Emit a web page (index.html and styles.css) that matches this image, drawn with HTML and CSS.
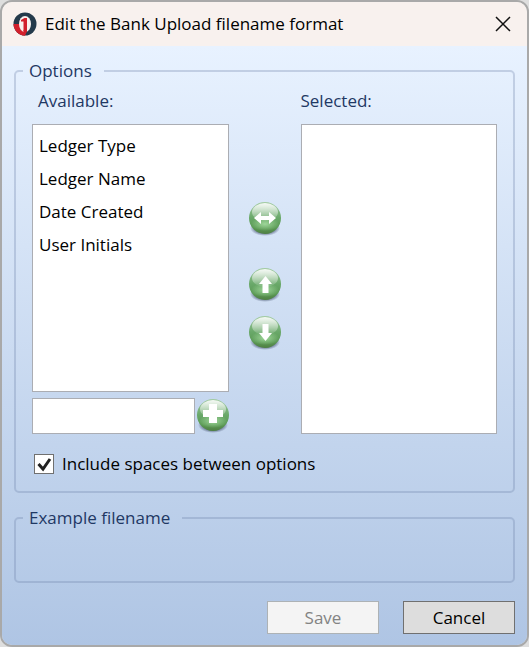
FILE: index.html
```
<!DOCTYPE html>
<html lang="en">
<head>
    <meta charset="UTF-8">
    <meta name="viewport" content="width=device-width, initial-scale=1.0">
    <title>Edit the Bank Upload filename format</title>
    <link rel="stylesheet" href="styles.css">
</head>
<body>
    <!-- Shared shape for the round green buttons -->
    <svg class="defs" width="0" height="0" aria-hidden="true">
        <defs>
            <linearGradient id="ball" x1="0" y1="0" x2="0" y2="1">
                <stop offset="0" stop-color="#a4cca4"/>
                <stop offset="0.5" stop-color="#69a869"/>
                <stop offset="0.8" stop-color="#5b9a55"/>
                <stop offset="1" stop-color="#4f7f42"/>
            </linearGradient>
            <linearGradient id="gloss" x1="0" y1="0" x2="0" y2="1">
                <stop offset="0" stop-color="#fff" stop-opacity="0.9"/>
                <stop offset="1" stop-color="#fff" stop-opacity="0.05"/>
            </linearGradient>
            <radialGradient id="glow">
                <stop offset="0" stop-color="#a5dca0" stop-opacity="0.9"/>
                <stop offset="1" stop-color="#a5dca0" stop-opacity="0"/>
            </radialGradient>
            <radialGradient id="shade">
                <stop offset="0.6" stop-color="#3c4a66" stop-opacity="0.8"/>
                <stop offset="1" stop-color="#3c4a66" stop-opacity="0"/>
            </radialGradient>
            <symbol id="orb" viewBox="0 0 34 36">
                <ellipse cx="17" cy="27" rx="15" ry="8" fill="url(#shade)"/>
                <circle cx="17" cy="17" r="16" fill="url(#ball)"/>
                <ellipse cx="17" cy="23" rx="14" ry="7" fill="url(#glow)"/>
                <ellipse cx="17" cy="11" rx="13" ry="9" fill="url(#gloss)"/>
            </symbol>
        </defs>
    </svg>

    <div class="window">
        <div class="titlebar">
            <svg class="logo" viewBox="0 0 24 24" aria-hidden="true">
                <circle cx="12" cy="12" r="11.500" fill="#243a4b"/>
                <path d="M0.500 12A11.500 11.500 0 0 0 12 23.500V12Z" fill="#d2202c"/>
                <ellipse cx="12" cy="12" rx="6" ry="8" fill="#f8f1ee"/>
                <path d="M8 9.500V8L11.500 6H14V19H10.500V9.500Z" fill="#d2202c"/>
                <path d="M10.500 18H14V19.500L12 23.500H10.500Z" fill="#d2202c"/>
            </svg>
            <h1>Edit the Bank Upload filename format</h1>
            <button type="button" class="close" aria-label="Close">
                <svg viewBox="0 0 16 16"><path d="M1 1L15 15M15 1L1 15" stroke="#111" stroke-width="1.500" fill="none"/></svg>
            </button>
        </div>

        <form class="content">
            <fieldset>
                <legend>Options</legend>
                <div class="lists">
                    <div class="column">
                        <label for="available">Available:</label>
                        <select id="available" class="available" multiple>
                            <option>Ledger Type</option>
                            <option>Ledger Name</option>
                            <option>Date Created</option>
                            <option>User Initials</option>
                        </select>
                        <div class="add-row">
                            <input type="text" aria-label="Custom text">
                            <button type="button" class="orb" aria-label="Add">
                                <svg viewBox="0 0 34 36">
                                    <use href="#orb"/>
                                    <path d="M13 6H21V12H27V19H21V25H13V19H7V12H13Z" fill="#fff"/>
                                </svg>
                            </button>
                        </div>
                    </div>
                    <div class="moves">
                        <button type="button" class="orb swap" aria-label="Move between lists">
                            <svg viewBox="0 0 34 36">
                                <use href="#orb"/>
                                <path d="M6 17L13 11V15H21V11L28 17L21 23V19H13V23Z" fill="#fff"/>
                            </svg>
                        </button>
                        <button type="button" class="orb" aria-label="Move up">
                            <svg viewBox="0 0 34 36">
                                <use href="#orb"/>
                                <path d="M17.500 9L24 17H20.500V26H14.500V17H11Z" fill="#fff"/>
                            </svg>
                        </button>
                        <button type="button" class="orb" aria-label="Move down">
                            <svg viewBox="0 0 34 36">
                                <use href="#orb"/>
                                <path d="M17.500 26L24 18H20.500V9H14.500V18H11Z" fill="#fff"/>
                            </svg>
                        </button>
                    </div>
                    <div class="column">
                        <label for="selected" class="flush">Selected:</label>
                        <select id="selected" class="selected" multiple></select>
                    </div>
                </div>
                <div class="check">
                    <input type="checkbox" id="spaces" checked>
                    <label for="spaces">Include spaces between options</label>
                </div>
            </fieldset>

            <fieldset class="example">
                <legend>Example filename</legend>
            </fieldset>

            <div class="buttons">
                <button type="submit" disabled>Save</button>
                <button type="button">Cancel</button>
            </div>
        </form>
    </div>
</body>
</html>
```
FILE: styles.css
```
* {
    box-sizing: border-box;
}
body {
    margin: 0;
    background-color: #dedede;
    font-family: "Open Sans", "Noto Sans", sans-serif;
    font-size: 17px;
    line-height: 24px;
    color: #000;
}
button,
input,
select {
    font: inherit;
    color: inherit;
    margin: 0;
}
.defs {
    position: absolute;
}
.window {
    display: flex;
    flex-direction: column;
    min-height: 100vh;
    border: 2px solid #a9a9a9;
    border-radius: 12px;
    overflow: hidden;
}
.titlebar {
    display: flex;
    align-items: center;
    height: 44px;
    padding: 0 16px 0 11px;
    background-color: #f8f1ee;
}
.logo {
    width: 24px;
    height: 24px;
    margin-right: 8px;
}
.titlebar h1 {
    flex: 1;
    margin: 0;
    font-size: 17px;
    font-weight: normal;
}
.close {
    padding: 0;
    border: none;
    background: none;
    line-height: 0;
}
.close svg {
    width: 16px;
    height: 16px;
}
.content {
    flex: 1;
    padding: 13px 12px 10px;
    background: linear-gradient(#e8f2ff, #afc5e4);
}
fieldset {
    min-width: 0;
    margin: 0 0 13px;
    padding: 6px 16px 15px;
    border: 2px solid rgba(110, 130, 170, 0.3);
    border-radius: 5px;
}
legend {
    margin-left: -9px;
    padding: 0 12px 0 6px;
    color: #1f3864;
}
.lists {
    display: grid;
    grid-template-columns: 1fr 72px 1fr;
}
.column {
    display: flex;
    flex-direction: column;
    min-width: 0;
}
.column label {
    margin-bottom: 11px;
    padding-left: 6px;
    color: #1f3864;
}
.column .flush {
    padding-left: 0;
}
select {
    width: 100%;
    padding: 5px 0;
    border: 1px solid #abadb3;
    border-radius: 0;
    background-color: #fff;
    overflow: hidden;
    outline: none;
}
.available {
    height: 268px;
}
.selected {
    flex: 1;
}
option {
    min-height: 33px;
    padding: 4px 6px 5px;
}
.add-row {
    display: flex;
    align-items: center;
    gap: 1px;
    margin: 6px -1px 0 0;
}
.add-row input {
    flex: 1;
    min-width: 0;
    height: 36px;
    padding: 4px 6px;
    border: 1px solid #abadb3;
    border-radius: 0;
    background-color: #fff;
}
.orb {
    width: 34px;
    padding: 0;
    border: none;
    background: none;
    line-height: 0;
}
.orb svg {
    width: 34px;
    height: 36px;
}
.moves {
    display: flex;
    flex-direction: column;
    align-items: center;
    gap: 12px;
    padding-top: 112px;
}
.swap {
    margin-bottom: 18px;
}
.check {
    display: flex;
    align-items: center;
    gap: 8px;
    margin-top: 18px;
    padding-left: 2px;
}
.check input {
    appearance: none;
    width: 20px;
    height: 20px;
    border: 1px solid #707070;
    background: #fff url("data:image/svg+xml,%3Csvg xmlns='http://www.w3.org/2000/svg' viewBox='0 0 18 18'%3E%3Cpath d='M3.500 9L8 14L15 4' fill='none' stroke='%23212121' stroke-width='3'/%3E%3C/svg%3E") center / 18px no-repeat;
}
.check input:not(:checked) {
    background-image: none;
}
.example {
    min-height: 77px;
    margin-bottom: 18px;
}
.buttons {
    display: flex;
    justify-content: flex-end;
    gap: 24px;
}
.buttons button {
    width: 112px;
    height: 33px;
    padding: 0;
    border: 1px solid #707070;
    background-color: #ddd;
}
.buttons button:disabled {
    border-color: #adb2b5;
    background-color: #f4f4f4;
    color: #838383;
}
```
